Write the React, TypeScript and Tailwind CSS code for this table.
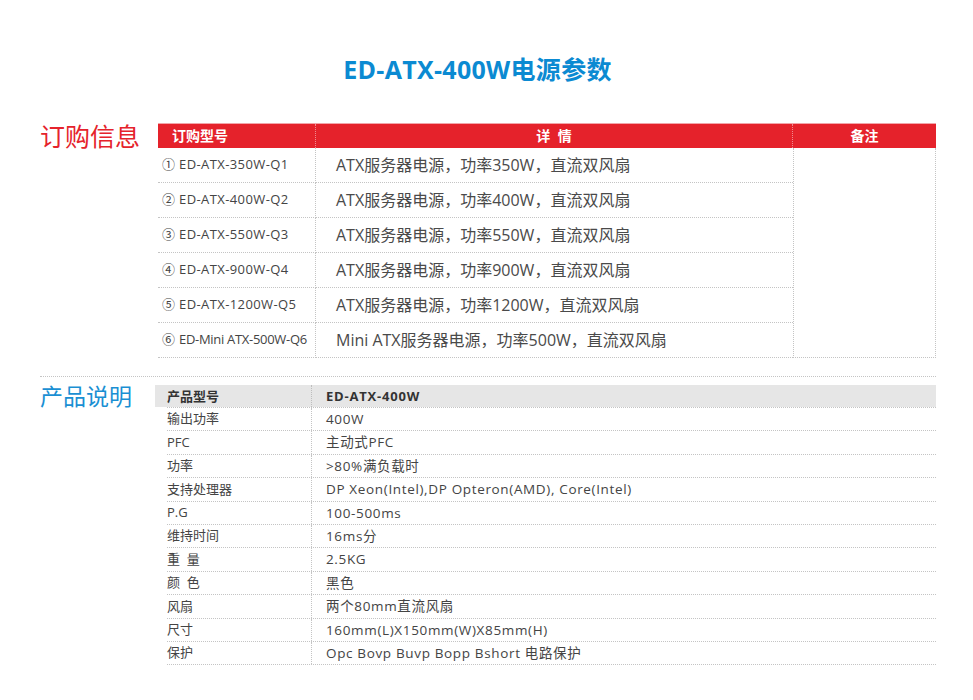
const font = { fontFamily: '"Open Sans", "Noto Sans CJK SC", sans-serif' };

const orders = [
  { no: "①", model: "ED-ATX-350W-Q1", detail: "ATX服务器电源，功率350W，直流双风扇" },
  { no: "②", model: "ED-ATX-400W-Q2", detail: "ATX服务器电源，功率400W，直流双风扇" },
  { no: "③", model: "ED-ATX-550W-Q3", detail: "ATX服务器电源，功率550W，直流双风扇" },
  { no: "④", model: "ED-ATX-900W-Q4", detail: "ATX服务器电源，功率900W，直流双风扇" },
  { no: "⑤", model: "ED-ATX-1200W-Q5", detail: "ATX服务器电源，功率1200W，直流双风扇" },
  { no: "⑥", model: "ED-Mini ATX-500W-Q6", detail: "Mini ATX服务器电源，功率500W，直流双风扇" },
];

const specs = [
  ["输出功率", "400W"],
  ["PFC", "主动式PFC"],
  ["功率", ">80%满负载时"],
  ["支持处理器", "DP Xeon(Intel),DP Opteron(AMD), Core(Intel)"],
  ["P.G", "100-500ms"],
  ["维持时间", "16ms分"],
  ["重  量", "2.5KG"],
  ["颜  色", "黑色"],
  ["风扇", "两个80mm直流风扇"],
  ["尺寸", "160mm(L)X150mm(W)X85mm(H)"],
  ["保护", "Opc Bovp Buvp Bopp Bshort 电路保护"],
];

export default function App() {
  return (
    <div className="w-[973px] h-[700px] bg-white" style={font}>
      {/* Title */}
      <div className="pt-[53px] pr-[18px] text-center">
        <h1 className="text-[25px] leading-[32px] font-bold text-[#0b8ad2] tracking-[0.3px]">ED-ATX-400W电源参数</h1>
      </div>

      {/* 订购信息 */}
      <div className="flex mt-[38px] pl-[40px]">
        <div className="w-[118px] text-[25px] leading-[28px] text-[#e5232c] -mt-[1px]">订购信息</div>
        <div className="grid grid-cols-[158px_477px_143px] border-t border-[#f2a5a9]">
          <div className="h-[24px] bg-[#e5222b] text-white text-[14px] font-bold leading-[24px] pl-[14px] border-r border-dotted border-[#f08a8f]">
            订购型号
          </div>
          <div className="h-[24px] bg-[#e5222b] text-white text-[14px] font-bold leading-[24px] text-center border-r border-dotted border-[#f08a8f]">
            详&nbsp;&nbsp;情
          </div>
          <div className="h-[24px] bg-[#e5222b] text-white text-[14px] font-bold leading-[24px] text-center">
            备注
          </div>
          {orders.map((o, i) => (
            <>
              <div
                key={`m${i}`}
                className="h-[35px] flex items-center pl-[4px] text-[13px] text-[#444] border-b border-r border-dotted border-[#c4c4c4]"
                style={{ gridRow: i + 2, gridColumn: 1 }}
              >
                <span className="mr-[4px]">{o.no}</span>
                <span className={i === 5 ? "tracking-[-0.3px]" : "tracking-[0.4px]"}>{o.model}</span>
              </div>
              <div
                key={`d${i}`}
                className="h-[35px] flex items-center pl-[20px] text-[16px] text-[#4a4a4a] border-b border-dotted border-[#c4c4c4]"
                style={{ gridRow: i + 2, gridColumn: 2 }}
              >
                {o.detail}
              </div>
            </>
          ))}
          <div className="row-start-2 row-span-6 col-start-3 border-l border-r border-b border-dotted border-[#c4c4c4]" />
        </div>
      </div>

      {/* divider */}
      <div className="ml-[40px] mt-[18px] w-[896px] border-t border-dotted border-[#c4c4c4]" />

      {/* 产品说明 */}
      <div className="flex mt-[6px] pl-[40px]">
        <div className="w-[115px] text-[23px] leading-[26px] text-[#1a8fd3]">产品说明</div>
        <div className="w-[781px] mt-[2px]">
          <div className="flex h-[22px] bg-[#e6e6e6] text-[13px] font-bold text-[#333] leading-[22px]">
            <div className="w-[156px] pl-[12px]">产品型号</div>
            <div className="flex-1 pl-[14px] border-l border-dotted border-[#bdbdbd] tracking-[0.8px]">ED-ATX-400W</div>
          </div>
          <div className="ml-[12px] border-t border-dotted border-[#c4c4c4]">
            {specs.map(([k, v], i) => (
              <div key={i} className="flex h-[23.4px] border-b border-dotted border-[#c4c4c4] text-[#444]">
                <div className="w-[144px] flex items-center whitespace-pre text-[13px]">{k}</div>
                <div className="flex-1 flex items-center pl-[14px] border-l border-dotted border-[#c4c4c4] text-[13.5px] tracking-[0.65px]">{v}</div>
              </div>
            ))}
          </div>
        </div>
      </div>
    </div>
  );
}
